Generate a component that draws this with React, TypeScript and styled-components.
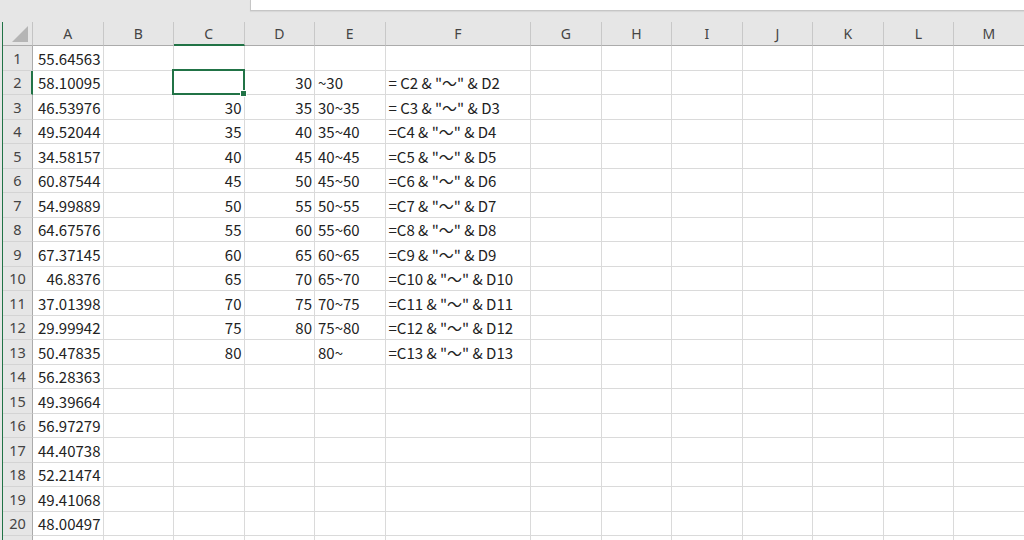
import styled, { createGlobalStyle } from 'styled-components';

const GlobalStyle = createGlobalStyle`
  html, body {
    margin: 0;
    padding: 0;
  }
  body {
    background: #e6e6e6;
    font-family: "Noto Sans CJK JP", "Noto Sans", sans-serif;
  }
`;

type Align = 'left' | 'right';

type CellData = {
  text: string,
  align: Align,
};

const COLUMNS = ['A', 'B', 'C', 'D', 'E', 'F', 'G', 'H', 'I', 'J', 'K', 'L', 'M'];
const WIDE_COLUMN = 'F';
const SELECTED_COLUMN = 'C';
const SELECTED_ROW = 2;
const LABELED_ROWS = 20;
const ROW_COUNT = 21;

const A_VALUES = [
  '55.64563', '58.10095', '46.53976', '49.52044', '34.58157', '60.87544', '54.99889',
  '64.67576', '67.37145', '46.8376', '37.01398', '29.99942', '50.47835', '56.28363',
  '49.39664', '56.97279', '44.40738', '52.21474', '49.41068', '48.00497',
];

const buildRow = (row: number): Record<string, CellData> => {
  const cells: Record<string, CellData> = {};
  const a = A_VALUES[row - 1];
  if (a) cells.A = { text: a, align: 'right' };
  if (row >= 2 && row <= 13) {
    const lower = row >= 3 ? String(30 + (row - 3) * 5) : '';
    const upper = row <= 12 ? String(30 + (row - 2) * 5) : '';
    if (lower) cells.C = { text: lower, align: 'right' };
    if (upper) cells.D = { text: upper, align: 'right' };
    cells.E = { text: `${lower}~${upper}`, align: 'left' };
    const eq = row <= 3 ? '= ' : '=';
    cells.F = { text: `${eq}C${row} & "〜" & D${row}`, align: 'left' };
  }
  return cells;
};

const StyledWindow = styled.div`
  width: 1024px;
  height: 540px;
  overflow: hidden;
  display: flex;
  flex-direction: column;
  background: #e6e6e6;
`;

const StyledTopBar = styled.div`
  height: 22px;
  display: flex;
  padding-left: 250px;
  flex-shrink: 0;
`;

const StyledFormulaBox = styled.div`
  flex: 1;
  height: 10px;
  background: #ffffff;
  border-left: 1px solid #c6c6c6;
  border-bottom: 1px solid #c6c6c6;
  box-shadow: 0 1px 1px rgba(0, 0, 0, 0.06);
`;

const StyledSheetFrame = styled.div`
  flex: 1;
  display: flex;
  padding-left: 2px;
  min-height: 0;
`;

const StyledSheet = styled.div`
  flex: 1;
  border-left: 1px solid #217346;
  background: #ffffff;
  overflow: hidden;
`;

const StyledGrid = styled.div`
  display: grid;
  grid-template-columns: 30px ${COLUMNS.map((c) => (c === WIDE_COLUMN ? '145.7px' : '70.5px')).join(' ')};
  grid-template-rows: 24px;
  grid-auto-rows: 24.5px;
  width: max-content;
`;

const StyledCorner = styled.div`
  background: #e6e6e6;
  border-right: 1px solid #c4c4c4;
  border-bottom: 1px solid #ababab;
  display: flex;
  align-items: flex-end;
  justify-content: flex-end;
  padding: 0 4px 3px 0;
  box-sizing: border-box;
`;

const StyledColumnHeader = styled.div<{ $selected: boolean }>`
  background: #e6e6e6;
  border-right: 1px solid #c8c8c8;
  border-bottom: ${(p) => (p.$selected ? '2px solid #217346' : '1px solid #ababab')};
  box-sizing: border-box;
  display: flex;
  align-items: center;
  justify-content: center;
  color: #444444;
  font-size: 14px;
  font-family: "Noto Sans", "Noto Sans CJK JP", sans-serif;
  padding-top: ${(p) => (p.$selected ? '1px' : '0')};
`;

const StyledRowHeader = styled.div<{ $selected: boolean }>`
  background: #e6e6e6;
  border-right: ${(p) => (p.$selected ? '2px solid #217346' : '1px solid #ababab')};
  border-bottom: 1px solid #d4d4d4;
  box-sizing: border-box;
  display: flex;
  align-items: center;
  justify-content: center;
  color: #444444;
  font-size: 14.5px;
  font-family: "Noto Sans", "Noto Sans CJK JP", sans-serif;
  padding-left: ${(p) => (p.$selected ? '1px' : '0')};
`;

const StyledCell = styled.div<{ $align: Align }>`
  position: relative;
  border-right: 1px solid #dadada;
  border-bottom: 1px solid #dadada;
  box-sizing: border-box;
  display: flex;
  align-items: center;
  justify-content: ${(p) => (p.$align === 'right' ? 'flex-end' : 'flex-start')};
  padding: 1px 2px 0 3px;
  font-size: 15px;
  color: #222222;
  white-space: nowrap;
  overflow: visible;
`;

const StyledSelection = styled.div`
  position: absolute;
  left: -2px;
  top: -2px;
  right: -1px;
  bottom: -1px;
  border: 2px solid #217346;
  pointer-events: none;
  z-index: 2;
`;

const StyledFillHandle = styled.div`
  position: absolute;
  right: -4px;
  bottom: -4px;
  width: 5px;
  height: 5px;
  background: #217346;
  border: 1px solid #ffffff;
`;

function CornerTriangle() {
  return (
    <svg width="16" height="16" viewBox="0 0 16 16">
      <polygon points="16,0 16,16 0,16" fill="#b5b5b5" />
    </svg>
  );
}

export default function App() {
  const rows = Array.from({ length: ROW_COUNT }, (_, i) => i + 1);

  return (
    <StyledWindow>
      <GlobalStyle />
      <StyledTopBar>
        <StyledFormulaBox />
      </StyledTopBar>
      <StyledSheetFrame>
        <StyledSheet>
          <StyledGrid>
            <StyledCorner>
              <CornerTriangle />
            </StyledCorner>
            {COLUMNS.map((col) => (
              <StyledColumnHeader key={col} $selected={col === SELECTED_COLUMN}>
                {col}
              </StyledColumnHeader>
            ))}
            {rows.map((row) => {
              const cells = buildRow(row);
              return [
                <StyledRowHeader key={`h${row}`} $selected={row === SELECTED_ROW}>
                  {row <= LABELED_ROWS ? row : ''}
                </StyledRowHeader>,
                ...COLUMNS.map((col) => {
                  const cell = cells[col];
                  const selected = row === SELECTED_ROW && col === SELECTED_COLUMN;
                  return (
                    <StyledCell key={`${col}${row}`} $align={cell ? cell.align : 'left'}>
                      {cell ? cell.text : ''}
                      {selected && (
                        <StyledSelection>
                          <StyledFillHandle />
                        </StyledSelection>
                      )}
                    </StyledCell>
                  );
                }),
              ];
            })}
          </StyledGrid>
        </StyledSheet>
      </StyledSheetFrame>
    </StyledWindow>
  );
}
